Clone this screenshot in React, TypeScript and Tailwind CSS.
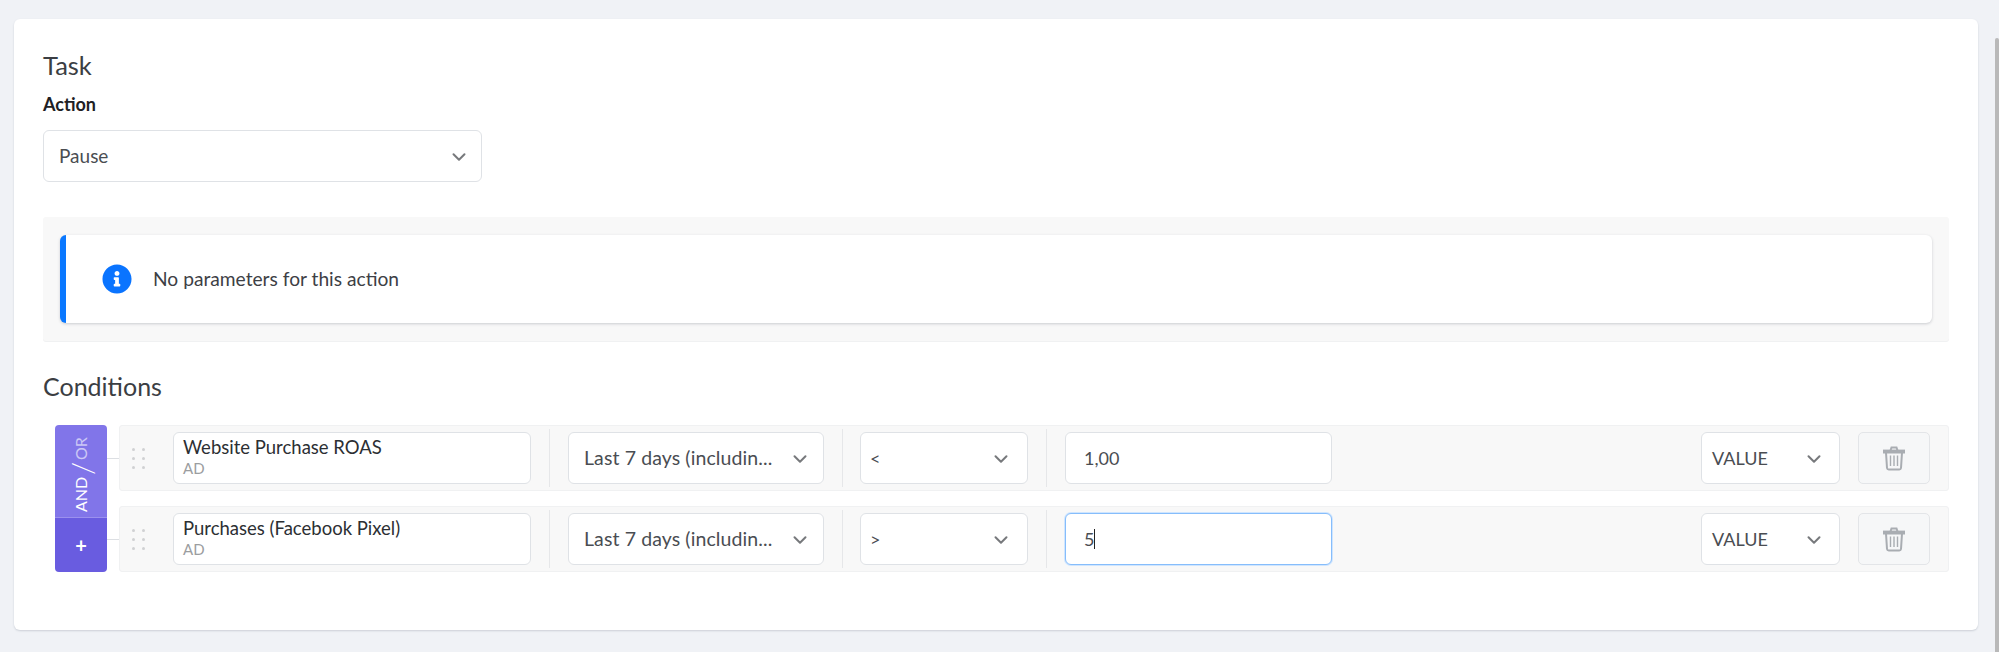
import clsx from 'clsx'
import { ChevronDown } from 'lucide-react'
import { FaInfoCircle } from 'react-icons/fa'

const font = 'font-["Lato",sans-serif]'

function SelectBox({ label, className, pad }: { label: string; className: string; pad: string }) {
  return (
    <div
      className={clsx(
        'flex h-[52px] shrink-0 items-center justify-between rounded-[6px] border border-[#dfe2e6] bg-white text-[#4a4d52]',
        pad,
        className
      )}
    >
      <span className="whitespace-nowrap">{label}</span>
      <ChevronDown size={22} strokeWidth={2.2} className="mt-[2px] text-[#77797c]" />
    </div>
  )
}

function Divider() {
  return <div className="mx-[18px] h-[58px] w-px shrink-0 bg-[#e6e7e9]" />
}

function TrashIcon() {
  return (
    <svg width="22" height="25" viewBox="0 0 22 25" fill="none" stroke="#a9adb2" strokeWidth="2">
      <path d="M1 6.500V4.600h20v1.900z" fill="#c3c6ca" />
      <path d="M7.500 4.500 8.500 1.500h5l1 3" />
      <path d="M3 6.500 4 22a1.800 1.800 0 0 0 1.800 1.600h10.400A1.800 1.800 0 0 0 18 22l1-15.500" />
      <path d="M7.500 9.500v10.500M11 9.500v10.500M14.500 9.500v10.500" strokeWidth="1.400" />
    </svg>
  )
}

function DragHandle() {
  return (
    <div className="ml-[12px] mr-[28px] grid w-[13px] shrink-0 grid-cols-2 gap-x-[7px] gap-y-[6px]">
      {[0, 1, 2, 3, 4, 5].map((i) => (
        <span key={i} className="h-[3px] w-[3px] rounded-full bg-[#d0d1d3]" />
      ))}
    </div>
  )
}

function ConditionRow({ name, op, value, focused }: { name: string; op: string; value: string; focused?: boolean }) {
  return (
    <div className="flex h-[66px] items-center rounded-[3px] border border-[#f0f1f2] bg-[#f8f8f8] pr-[18px]">
      <DragHandle />
      <div className="flex h-[52px] w-[358px] shrink-0 flex-col justify-center rounded-[6px] border border-[#dfe2e6] bg-white pb-[4px] pl-[9px]">
        <span className="text-[18.500px] leading-[24px] text-[#2c2f33]">{name}</span>
        <span className="text-[15px] leading-[18px] text-[#9b9da0]">AD</span>
      </div>
      <Divider />
      <SelectBox
        label="Last 7 days (includin..."
        className="w-[256px] text-[19.500px] tracking-[0.1px]"
        pad="pl-[15px] pr-[12px]"
      />
      <Divider />
      <SelectBox label={op} className="-ml-px w-[168px] text-[18px]" pad="pl-[9px] pr-[15px]" />
      <Divider />
      <div
        className={clsx(
          'flex h-[52px] w-[267px] shrink-0 items-center rounded-[6px] bg-white pl-[18px] text-[18px] text-[#4a4d52]',
          focused ? 'border border-[#86bdfb] shadow-[0_0_0_1px_#cfe5fe]' : 'border border-[#dfe2e6]'
        )}
      >
        {value}
        {focused && <span className="h-[20px] w-px bg-[#222]" />}
      </div>
      <div className="flex-1" />
      <SelectBox label="VALUE" className="w-[139px] text-[18px]" pad="pl-[10px] pr-[14px]" />
      <div className="ml-[18px] flex h-[52px] w-[72px] shrink-0 items-center justify-center rounded-[5px] border border-[#e3e5e8] bg-[#f6f7f8]">
        <TrashIcon />
      </div>
    </div>
  )
}

export default function App() {
  return (
    <div className={clsx('flex h-[652px] w-full overflow-hidden bg-[#f0f2f6]', font)}>
      <div className="flex-1 pl-[14px] pr-[17px] pt-[19px]">
        <div className="h-[611px] rounded-[6px] bg-white px-[29px] pt-[32px] shadow-[0_1px_2px_rgba(40,50,70,0.18)]">
          <h2 className="text-[25.500px] leading-[28px] text-[#3b3e43]">Task</h2>
          <div className="mt-[13px] text-[18px] font-bold leading-[24px] text-[#1e2024]">Action</div>
          <SelectBox label="Pause" className="mt-[14px] w-[439px] text-[19px]" pad="pl-[15px] pr-[11px]" />

          <div className="mt-[35px] rounded-[3px] bg-[#f8f8f8] px-[17px] pb-[18px] pt-[18px] shadow-[0_1px_0_#f0f1f2]">
            <div className="flex h-[88px] items-center rounded-[6px] border-l-[6px] border-[#0a78ff] bg-white pl-[36px] shadow-[0_1px_3px_rgba(40,50,70,0.22)]">
              <FaInfoCircle size={30} className="text-[#0a74ff]" />
              <span className="ml-[21px] text-[19.200px] text-[#3d4045]">No parameters for this action</span>
            </div>
          </div>

          <h2 className="mt-[31px] text-[25px] leading-[28px] text-[#3b3e43]">Conditions</h2>

          <div className="ml-[12px] mt-[25px] flex">
            <div className="flex w-[52px] shrink-0 flex-col overflow-hidden rounded-[4px] text-white">
              <div className="flex h-[93px] items-center justify-center border-b border-[#9b90ee] bg-[#8175e9] pt-[8px]">
                <span className="flex rotate-180 items-center gap-[2px] text-[16px] leading-none [writing-mode:vertical-rl]">
                  <span>AND</span>
                  <span className="text-[30px] font-light leading-[14px]">/</span>
                  <span className="opacity-60">OR</span>
                </span>
              </div>
              <div className="flex h-[54px] items-center justify-center bg-[#695ce0] text-[20px] font-bold leading-none">
                +
              </div>
            </div>
            <div className="flex w-[12px] shrink-0 flex-col gap-[15px]">
              <div className="flex h-[66px] items-center">
                <div className="h-px w-full bg-[#dcdfe3]" />
              </div>
              <div className="flex h-[66px] items-center">
                <div className="h-px w-full bg-[#dcdfe3]" />
              </div>
            </div>
            <div className="flex flex-1 flex-col gap-[15px]">
              <ConditionRow name="Website Purchase ROAS" op="<" value="1,00" />
              <ConditionRow name="Purchases (Facebook Pixel)" op=">" value="5" focused />
            </div>
          </div>
        </div>
      </div>
      <div className="w-[4px] shrink-0 pt-[38px]">
        <div className="h-full rounded-t-[3px] bg-[#b9b9b9]" />
      </div>
    </div>
  )
}
